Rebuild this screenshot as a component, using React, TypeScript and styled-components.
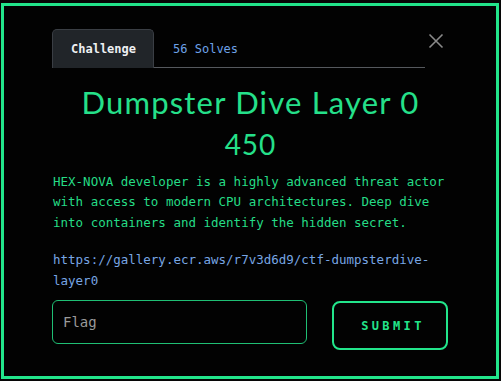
import React from "react";
import styled, { createGlobalStyle } from "styled-components";

const GREEN = "#22e58b";
const MONO = `"DejaVu Sans Mono", "Liberation Mono", monospace`;

const Global = createGlobalStyle`
  html, body { margin: 0; padding: 0; background: #060606; }
  body { width: 501px; height: 381px; overflow: hidden; font-family: ${MONO}; }
  * { box-sizing: border-box; }
`;

const Modal = styled.div`
  margin: 3px 0 0 1px;
  width: 498px;
  height: 376px;
  border: 3px solid ${GREEN};
  background: #020202;
  padding: 23px 47px 0 48px;
  display: flex;
  flex-direction: column;
`;

const Header = styled.div`
  display: flex;
  align-items: flex-start;
`;

const Nav = styled.div`
  flex: 1;
  display: flex;
  border-bottom: 1px solid #55585d;
  height: 39px;
`;

const Tab = styled.div<{ $active?: boolean }>`
  height: 39px;
  padding: 0 17px 0 18px;
  display: flex;
  align-items: center;
  font-family: ${MONO};
  font-size: 12px;
  color: ${(p) => (p.$active ? "#eef0f2" : "#6ea2e8")};
  background: ${(p) => (p.$active ? "#212529" : "transparent")};
  border: 1px solid ${(p) => (p.$active ? "#3a3e44" : "transparent")};
  border-bottom: none;
  border-radius: 5px 5px 0 0;
  font-weight: ${(p) => (p.$active ? "bold" : "normal")};
`;

const Close = styled.button`
  width: 21px;
  height: 16px;
  margin: 4px 0 0 3px;
  padding: 0;
  background: none;
  border: none;
  display: flex;
  justify-content: flex-start;
`;

const Title = styled.h1`
  margin: 17px 0 0;
  font-family: Lato, "Noto Sans", sans-serif;
  font-weight: normal;
  font-size: 31px;
  letter-spacing: 1.2px;
  line-height: 34px;
  color: #25e08a;
  text-align: center;
`;

const Points = styled.div`
  margin-top: 9px;
  font-family: Lato, "Noto Sans", sans-serif;
  font-size: 28px;
  letter-spacing: 1px;
  line-height: 33.6px;
  color: #25e08a;
  text-align: center;
`;

const Desc = styled.p`
  margin: 10px 0 0 1px;
  font-family: ${MONO};
  font-size: 12.5px;
  line-height: 20.5px;
  color: #25dc86;
`;

const Link = styled.a`
  display: block;
  margin: 17px 0 0 1px;
  font-family: ${MONO};
  font-size: 12.5px;
  line-height: 20.5px;
  color: #78a6e4;
  text-decoration: none;
`;

const FormRow = styled.div`
  display: flex;
  align-items: flex-start;
  gap: 25px;
  margin-top: 9px;
`;

const Input = styled.input`
  width: 255px;
  height: 44px;
  border: 1px solid #1fbf74;
  border-radius: 6px;
  background: #020202;
  padding: 0 10px;
  font-family: ${MONO};
  font-size: 14px;
  color: #ddd;
  outline: none;
  &::placeholder { color: #9a9a9a; }
`;

const Submit = styled.button`
  margin-top: 1px;
  width: 116px;
  height: 49px;
  border: 2px solid ${GREEN};
  border-radius: 8px;
  background: #020202;
  color: ${GREEN};
  font-family: ${MONO};
  font-weight: bold;
  font-size: 12px;
  letter-spacing: 3.4px;
  padding: 0 0 0 6px;
`;

export default function App() {
  return (
    <>
      <Global />
      <Modal>
        <Header>
          <Nav>
            <Tab $active>Challenge</Tab>
            <Tab>56 Solves</Tab>
          </Nav>
          <Close aria-label="close">
            <svg width="16" height="16" viewBox="0 0 16 16">
              <path d="M1.5 1.5 L14.5 14.5 M14.5 1.5 L1.5 14.5" stroke="#8a8a8a" strokeWidth="1.6" fill="none" />
            </svg>
          </Close>
        </Header>
        <Title>Dumpster Dive Layer 0</Title>
        <Points>450</Points>
        <Desc>
          HEX-NOVA developer is a highly advanced threat actor with access to modern CPU architectures. Deep dive into containers and identify the hidden secret.
        </Desc>
        <Link href="#">https://gallery.ecr.aws/r7v3d6d9/ctf-dumpsterdive-layer0</Link>
        <FormRow>
          <Input placeholder="Flag" />
          <Submit>SUBMIT</Submit>
        </FormRow>
      </Modal>
    </>
  );
}
